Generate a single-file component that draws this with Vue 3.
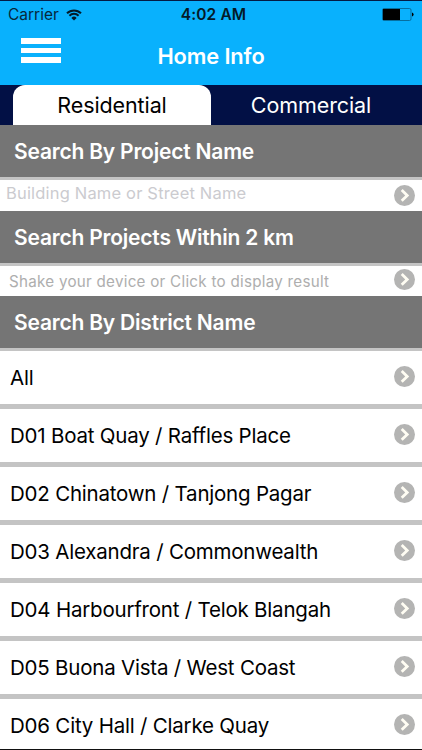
<template>
  <div class="screen">
    <header class="header">
      <div class="status-bar">
        <div class="carrier">
          <span>Carrier</span>
          <svg class="wifi" viewBox="0 0 16 12" width="16" height="12">
            <path d="M1 4.3A10 10 0 0 1 15 4.3" />
            <path d="M3.4 6.7A6.6 6.6 0 0 1 12.6 6.7" />
            <path class="wifi-dot" d="M8 11.6L5.4 8.9A3.7 3.7 0 0 1 10.6 8.9Z" />
          </svg>
        </div>
        <span class="time">4:02 AM</span>
        <svg class="battery" viewBox="0 0 32 13" width="32" height="13">
          <rect class="battery-body" x="0.5" y="0.5" width="28.5" height="12" rx="1.5" />
          <rect x="1" y="1" width="17" height="11" />
          <path d="M30 4.5Q31.6 5 31.6 6.5T30 8.5Z" />
        </svg>
      </div>
      <div class="nav-bar">
        <button class="menu-btn" title="Menu">
          <span></span>
          <span></span>
          <span></span>
        </button>
        <h1>Home Info</h1>
      </div>
    </header>

    <nav class="tabs">
      <button
        v-for="tab in tabs"
        :key="tab"
        class="tab"
        :class="{ active: tab === activeTab }"
        @click="activeTab = tab"
      >
        {{ tab }}
      </button>
    </nav>

    <h2>Search By Project Name</h2>
    <div class="search-row">
      <input v-model="query" type="text" placeholder="Building Name or Street Name" />
      <svg class="arrow" viewBox="0 0 21 21" width="21" height="21">
        <circle cx="10.5" cy="10.5" r="10.5" />
        <path d="M7.7 5.1L13.2 10.4L7.7 15.7" />
      </svg>
    </div>

    <h2>Search Projects Within 2 km</h2>
    <div class="search-row shake-row">
      <span class="hint">Shake your device or Click to display result</span>
      <svg class="arrow" viewBox="0 0 21 21" width="21" height="21">
        <circle cx="10.5" cy="10.5" r="10.5" />
        <path d="M7.7 5.1L13.2 10.4L7.7 15.7" />
      </svg>
    </div>

    <h2>Search By District Name</h2>
    <ul class="districts">
      <li v-for="district in districts" :key="district">
        <span>{{ district }}</span>
        <svg class="arrow" viewBox="0 0 21 21" width="21" height="21">
          <circle cx="10.5" cy="10.5" r="10.5" />
          <path d="M7.7 5.1L13.2 10.4L7.7 15.7" />
        </svg>
      </li>
    </ul>
  </div>
</template>

<script setup>
import { ref } from 'vue';

const tabs = ['Residential', 'Commercial'];
const activeTab = ref('Residential');
const query = ref('');

const districts = [
  'All',
  'D01 Boat Quay / Raffles Place',
  'D02 Chinatown / Tanjong Pagar',
  'D03 Alexandra / Commonwealth',
  'D04 Harbourfront / Telok Blangah',
  'D05 Buona Vista / West Coast',
  'D06 City Hall / Clarke Quay'
];
</script>

<style>
body {
  overflow: hidden;
}
</style>

<style scoped>
.screen {
  display: flex;
  flex-direction: column;
  width: 422px;
  height: 750px;
  box-sizing: border-box;
  overflow: hidden;
  border-top: 1px solid #031b45;
  border-bottom: 1px solid #111;
  background-color: #fff;
  font-family: Inter, "Liberation Sans", sans-serif;
}

.screen > * {
  flex-shrink: 0;
}

button {
  border: none;
  padding: 0;
  background: none;
  font-family: inherit;
  cursor: pointer;
}

.header {
  height: 84px;
  background-color: #09b1fd;
}

.status-bar {
  display: grid;
  grid-template-columns: 1fr auto 1fr;
  align-items: center;
  height: 27px;
  padding: 0 8px;
  color: #06283c;
  font-size: 15.5px;
}

.carrier {
  display: flex;
  align-items: center;
  gap: 7px;
}

.wifi {
  fill: none;
  stroke: #041a28;
  stroke-width: 2;
}

.wifi-dot {
  fill: #041a28;
  stroke: none;
}

.time {
  padding-left: 5px;
  color: #041a28;
  font-weight: 600;
  letter-spacing: 0.1px;
}

.battery {
  justify-self: end;
}

.battery-body {
  fill: none;
  stroke: #065e88;
  stroke-width: 0.8;
}

.nav-bar {
  display: grid;
  grid-template-columns: 60px 1fr 60px;
  height: 57px;
}

.menu-btn {
  display: flex;
  flex-direction: column;
  gap: 4px;
  width: 40px;
  height: 25px;
  margin: 10px 0 0 21px;
}

.menu-btn span {
  width: 40px;
  height: 5.6px;
  background-color: #fff;
}

h1 {
  margin: 0;
  color: #fff;
  font-size: 21.8px;
  font-weight: 600;
  letter-spacing: -0.1px;
  line-height: 56px;
  text-align: center;
}

.tabs {
  display: flex;
  height: 40px;
  padding-left: 13px;
  background-color: #021045;
}

.tab {
  width: 198px;
  color: #fff;
  font-size: 21.5px;
  letter-spacing: -0.1px;
  line-height: 40px;
}

.tab:last-child {
  width: 200px;
}

.tab.active {
  border-radius: 12px 12px 0 0;
  background-color: #fff;
  color: #000;
}

h2 {
  height: 52px;
  margin: 0;
  padding-left: 14px;
  border-bottom: 3px solid #c4c4c4;
  background-color: #757575;
  color: #fff;
  font-size: 21px;
  font-weight: 600;
  letter-spacing: -0.2px;
  line-height: 53px;
}

.search-row {
  display: flex;
  align-items: center;
  justify-content: space-between;
  height: 30.5px;
  padding: 0 7px 0 6px;
}

.search-row input {
  flex-grow: 1;
  border: none;
  padding: 0 0 5px;
  outline: none;
  font-family: inherit;
  font-size: 16.5px;
  letter-spacing: 0.18px;
}

.search-row input::placeholder {
  color: #cbcbcf;
  opacity: 1;
}

.shake-row {
  box-sizing: border-box;
  padding-left: 9px;
  padding-bottom: 2px;
}

.hint {
  padding-top: 3px;
  color: #aeaeae;
  font-size: 15.2px;
  letter-spacing: 0.26px;
}

.arrow {
  flex-shrink: 0;
}

.arrow circle {
  fill: #b4b4b3;
}

.arrow path {
  fill: none;
  stroke: #fffdf3;
  stroke-width: 2.8;
}

.districts {
  margin: 0;
  padding: 0;
  list-style: none;
}

.districts li {
  display: flex;
  align-items: center;
  justify-content: space-between;
  height: 51px;
  padding: 0 7px 2px 10px;
  border-bottom: 5px solid #c4c4c4;
  color: #000;
  font-size: 20.5px;
  letter-spacing: -0.21px;
}

.districts span {
  padding-top: 2px;
}
</style>
